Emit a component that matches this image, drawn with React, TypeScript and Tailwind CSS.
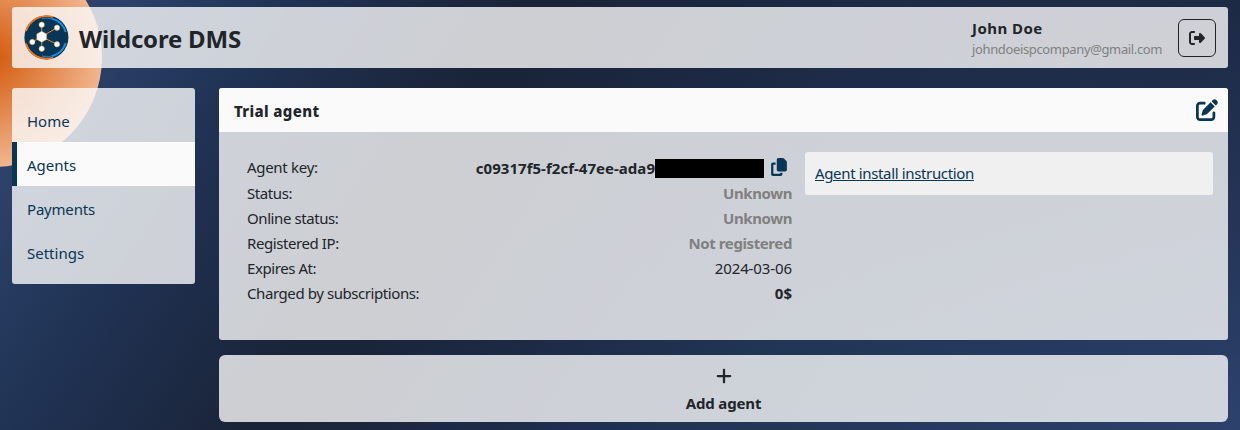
import { FaCopy, FaPenToSquare, FaPlus, FaRightFromBracket } from "react-icons/fa6";

function Logo() {
  return (
    <svg viewBox="0 0 45 45" className="size-[45px] shrink-0">
      <circle cx="22.4" cy="22.4" r="22" fill="#083656" />
      <path d="M2 16A21.3 21.3 0 0 1 29 2.2" fill="none" stroke="#f97316" strokeWidth="1.8" />
      <path d="M2 28.5A21.3 21.3 0 0 0 29 42.6" fill="none" stroke="#f97316" strokeWidth="1.8" />
      <path d="M18 3.6A19.3 19.3 0 0 1 29 4.3M18 41.2A19.3 19.3 0 0 0 29 40.5" fill="none" stroke="#1479bd" strokeWidth="1.2" />
      <path d="M28 3.6A19.8 19.8 0 0 1 41.7 17M41.7 28A19.8 19.8 0 0 1 28 41.2" fill="none" stroke="#1491e6" strokeWidth="2" />
      <path d="M17.7 9.7V33.7M17.7 21.7L33 12.7M17.7 21.7L33 29.3M17.7 21.7L8.3 27" stroke="#e08a2a" strokeWidth="1" />
      <g fill="#fff" stroke="#e89a3c" strokeWidth=".5">
        <circle cx="17.7" cy="9.7" r="2.7" />
        <circle cx="33" cy="12.7" r="2.7" />
        <circle cx="33" cy="29.3" r="2.7" />
        <circle cx="17.7" cy="33.7" r="2.7" />
        <circle cx="8.3" cy="27" r="2.7" />
        <path d="M17.7 16.2L22.6 19V24.4L17.7 27.2L12.8 24.4V19Z" strokeLinejoin="round" />
      </g>
    </svg>
  );
}

const links = ["Home", "Agents", "Payments", "Settings"];

const rows = [
  { label: "Status:", value: "Unknown", style: "font-bold tracking-[-0.4px] text-[#808080]" },
  { label: "Online status:", value: "Unknown", style: "font-bold tracking-[-0.4px] text-[#808080]" },
  { label: "Registered IP:", value: "Not registered", style: "font-bold tracking-[-0.4px] text-[#808080]" },
  { label: "Expires At:", value: "2024-03-06", style: "tracking-[-0.1px]" },
  { label: "Charged by subscriptions:", value: "0$", style: "font-bold" },
];

export default function App() {
  return (
    <div className="relative h-[430px] w-[1240px] overflow-hidden bg-[radial-gradient(ellipse_900px_400px_at_1240px_0px,rgba(26,36,60,0.75),rgba(26,36,60,0)),linear-gradient(123deg,#2d416b_0px,#2d416b_100px,#24395d_180px,#1f3050_270px,#1a2438_440px,#1a2438_480px,#1d2b48_650px,#213555_830px,#263b60_1040px,#2c416b_1276px)] font-['Noto_Sans',sans-serif] text-[15px] text-[#212529]">
      <div className="absolute top-[-52px] left-[-117px] size-[219px] rounded-full bg-[radial-gradient(circle,#d35a0d_0px,#f2b68f_110px)]" />
      <div className="relative px-3 pt-[7px]">
        <header className="flex h-[61px] items-center rounded-[3px] bg-[#fafafa]/80 pr-3 pl-3">
          <Logo />
          <h1 className="ml-[10px] pt-[3px] text-[24px] font-bold tracking-[-0.2px]">Wildcore DMS</h1>
          <div className="mr-4 ml-auto w-[190px] pt-[2px] whitespace-nowrap">
            <div className="text-[15px] leading-[22px] font-bold tracking-[0.45px]">John Doe</div>
            <div className="text-[13px] leading-[21px] tracking-[-0.36px] text-[#808080]">johndoeispcompany@gmail.com</div>
          </div>
          <button className="flex size-[38px] items-center justify-center rounded-md border border-[#212529]">
            <FaRightFromBracket size={16} />
          </button>
        </header>
        <div className="mt-5 flex items-start gap-6">
          <nav className="h-[196px] w-[183px] rounded-[3px] bg-[#fafafa]/80 pt-[10px] text-[#083656]">
            {links.map((l) => (
              <a key={l} className={l === "Agents" ? "flex h-11 items-center border-l-[5px] border-[#083656] bg-[#fafafa] pt-[3px] pl-[10px]" : l === "Payments" ? "flex h-11 items-center pt-[3px] pl-[15px] tracking-[-0.2px]" : "flex h-11 items-center pt-[3px] pl-[15px]"}>
                {l}
              </a>
            ))}
          </nav>
          <main className="flex w-[1009px] flex-col gap-[15px]">
            <section className="h-[252px] overflow-hidden rounded-[3px] bg-[#fafafa]/80">
              <div className="flex h-11 items-center justify-between bg-[#fafafa] pr-[10px] pl-[15px]">
                <h2 className="pt-[3px] font-extrabold tracking-[0.35px]">Trial agent</h2>
                <FaPenToSquare size={22} className="text-[#083656]" />
              </div>
              <div className="flex gap-[13px] pt-5 pr-[15px] pl-7">
                <div className="w-[545px] pt-[3px] leading-[25px]">
                  <div className="flex h-[26px] items-center">
                    <span className="mr-auto pb-[2px] tracking-[-0.3px]">Agent key:</span>
                    <span className="pt-px font-bold tracking-[0.03px]">c09317f5-f2cf-47ee-ada9</span>
                    <span className="h-[19px] w-[109px] bg-black" />
                    <FaCopy size={18} className="mr-1 mb-[2px] ml-[6px] text-[#083656]" />
                  </div>
                  {rows.map((r) => (
                    <div key={r.label} className="flex h-[25px] items-center justify-between">
                      <span className="tracking-[-0.42px]">{r.label}</span>
                      <span className={r.style}>{r.value}</span>
                    </div>
                  ))}
                </div>
                <div className="flex h-[43px] w-[408px] items-center rounded-[3px] bg-[#f0f0f0] px-[10px] tracking-[-0.35px] text-[#083656]">
                  <a className="underline">Agent install instruction</a>
                </div>
              </div>
            </section>
            <button className="flex h-[67px] flex-col items-center rounded-md bg-[#fafafa]/80 pt-3">
              <FaPlus size={18} />
              <span className="mt-[7px] leading-[23px] font-bold tracking-[-0.15px]">Add agent</span>
            </button>
          </main>
        </div>
      </div>
    </div>
  );
}
